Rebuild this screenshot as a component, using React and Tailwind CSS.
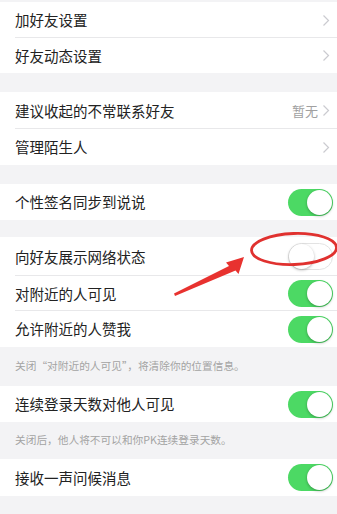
import React from "react";

const font = { fontFamily: '"Noto Sans CJK SC", "Noto Sans", sans-serif' };

function Chevron() {
  return (
    <svg width="8" height="13" viewBox="0 0 8 13" className="ml-1">
      <path d="M1.5 1.5 L6.5 6.5 L1.5 11.5" fill="none" stroke="#cbcbd0" strokeWidth="1.2" />
    </svg>
  );
}

function Toggle({ on }) {
  return on ? (
    <div className="w-[45px] h-[27px] rounded-full bg-[#4cd964] relative">
      <div className="absolute right-[1px] top-[1px] w-[25px] h-[25px] rounded-full bg-white shadow-[0_1px_3px_rgba(0,0,0,0.3)]" />
    </div>
  ) : (
    <div className="w-[45px] h-[27px] rounded-full bg-white border border-[#e3e3e3] relative">
      <div className="absolute left-0 top-0 w-[25px] h-[25px] rounded-full bg-white shadow-[0_1px_3px_rgba(0,0,0,0.3)]" />
    </div>
  );
}

function Row({ label, right, h = "h-[36px]", divider }) {
  return (
    <div className={`relative flex items-center justify-between pl-[15px] pr-[4px] bg-white ${h}`}>
      <span className="text-[14.5px] text-[#222]">{label}</span>
      {right}
      {divider && <div className="absolute bottom-0 left-[15px] right-0 h-px bg-[#e8e8ea]" />}
    </div>
  );
}

const chev = (
  <span className="pr-[3px]">
    <Chevron />
  </span>
);

export default function App() {
  return (
    <div style={font} className="relative w-[337px] h-[514px] bg-[#f3f3f5] overflow-hidden">
      <div className="h-[2px]" />
      <Row label="加好友设置" right={chev} divider />
      <Row label="好友动态设置" right={chev} h="h-[35px]" />
      <div className="h-[19px]" />
      <Row
        label="建议收起的不常联系好友"
        right={
          <span className="flex items-center pr-[3px] text-[13px] text-[#a0a0a0]">
            暂无
            <Chevron />
          </span>
        }
        h="h-[37px]"
        divider
      />
      <Row label="管理陌生人" right={chev} />
      <div className="h-[19px]" />
      <Row label="个性签名同步到说说" right={<Toggle on />} />
      <div className="h-[17px]" />
      <Row label="向好友展示网络状态" right={<Toggle on={false} />} h="h-[39px]" divider />
      <Row label="对附近的人可见" right={<Toggle on />} h="h-[35px]" divider />
      <Row label="允许附近的人赞我" right={<Toggle on />} />
      <div className="h-[39px] flex items-center pl-[15px] text-[10.7px] text-[#a3a3a3]">
        关闭“对附近的人可见”，将清除你的位置信息。
      </div>
      <Row label="连续登录天数对他人可见" right={<Toggle on />} />
      <div className="h-[37px] flex items-center pl-[15px] text-[10.7px] text-[#a3a3a3]">
        关闭后，他人将不可以和你PK连续登录天数。
      </div>
      <Row label="接收一声问候消息" right={<Toggle on />} h="h-[37px]" />

      <svg className="absolute left-0 top-0" width="337" height="514" viewBox="0 0 337 514">
        <ellipse cx="294" cy="249" rx="42.5" ry="15.5" fill="none" stroke="#e0312f" strokeWidth="2.8" transform="rotate(-2 294 249)" />
        <polygon points="174,293.5 229,266 226,262.5 244,257 238.5,274 235.5,270.5 175,296" fill="#e8322f" />
      </svg>
    </div>
  );
}
